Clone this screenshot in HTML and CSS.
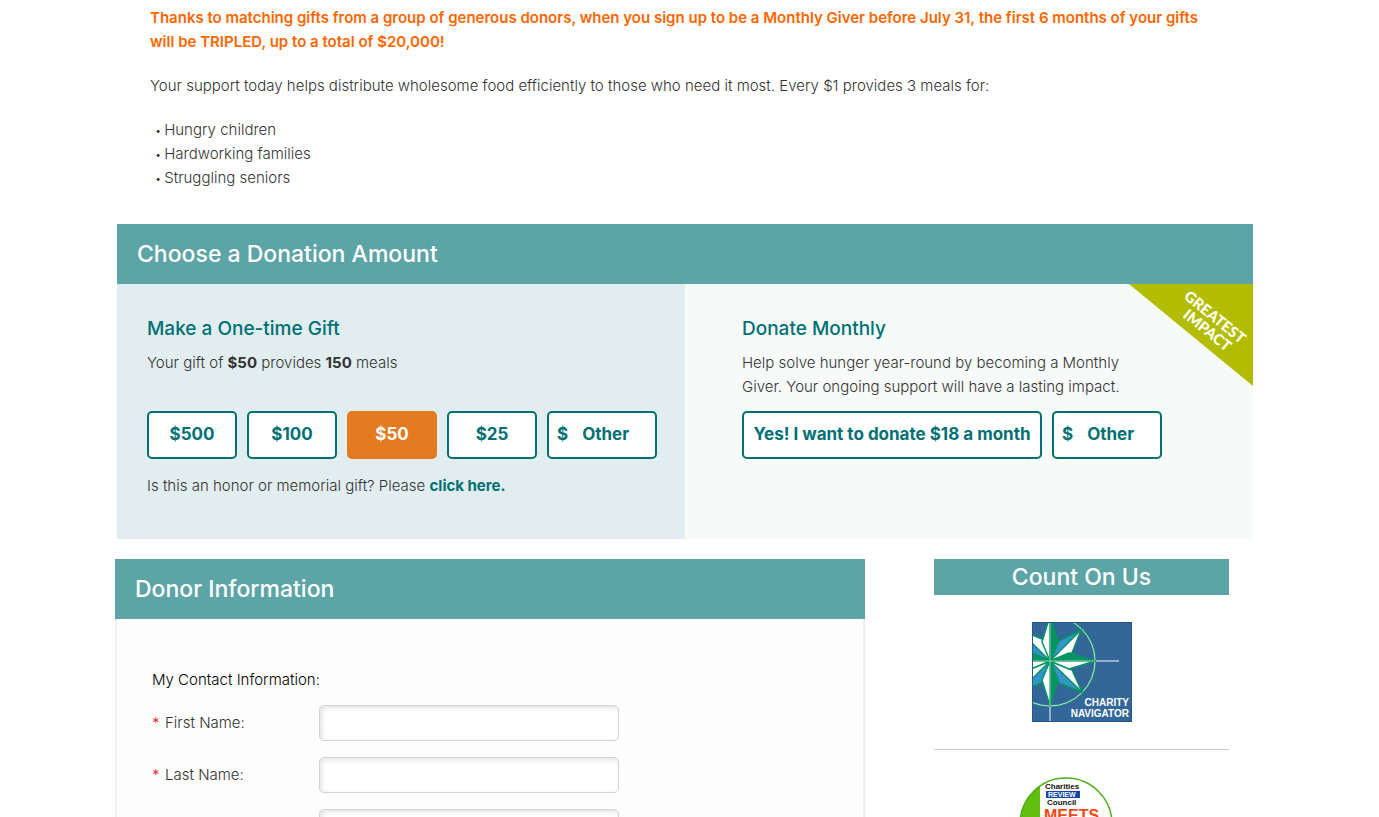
FILE: index.html
```
<!DOCTYPE html>
<html lang="en">
<head>
<meta charset="utf-8">
<title>Donate</title>
<link rel="stylesheet" href="styles.css">
</head>
<body>
<main class="page">
  <section class="intro">
    <p class="intro-match">Thanks to matching gifts from a group of generous donors, when you sign up to be a Monthly Giver before July 31, the first 6 months of your gifts will be TRIPLED, up to a total of $20,000!</p>
    <p>Your support today helps distribute wholesome food efficiently to those who need it most. Every $1 provides 3 meals for:</p>
    <ul class="intro-list">
      <li>Hungry children</li>
      <li>Hardworking families</li>
      <li>Struggling seniors</li>
    </ul>
  </section>

  <section class="donation">
    <h2 class="bar">Choose a Donation Amount</h2>
    <div class="options">
      <div class="option option-once">
        <h3 class="option-title">Make a One-time Gift</h3>
        <p class="option-text">Your gift of <strong>$50</strong> provides <strong>150</strong> meals</p>
        <div class="amounts">
          <button type="button" class="amount">$500</button>
          <button type="button" class="amount">$100</button>
          <button type="button" class="amount amount-active">$50</button>
          <button type="button" class="amount">$25</button>
          <label class="other">$<input type="text" class="other-input" placeholder="Other" aria-label="Other one-time amount"></label>
        </div>
        <p>Is this an honor or memorial gift? Please <a class="link" href="#honor">click here.</a></p>
      </div>
      <div class="option option-monthly">
        <h3 class="option-title">Donate Monthly</h3>
        <p class="option-text">Help solve hunger year-round by becoming a Monthly Giver. Your ongoing support will have a lasting impact.</p>
        <div class="amounts">
          <button type="button" class="amount amount-wide">Yes! I want to donate $18 a month</button>
          <label class="other">$<input type="text" class="other-input" placeholder="Other" aria-label="Other monthly amount"></label>
        </div>
        <svg class="ribbon" viewBox="0 0 124 102" role="img" aria-label="Greatest impact">
          <path d="M0 0H124V102Z" fill="#b3bd00"/>
          <g transform="translate(54 14) rotate(39)" class="ribbon-text">
            <text x="0" y="0">GREATEST</text>
            <text x="11" y="15">IMPACT</text>
          </g>
        </svg>
      </div>
    </div>
  </section>

  <div class="columns">
    <form class="donor">
      <h2 class="bar">Donor Information</h2>
      <div class="donor-body">
        <p class="donor-title">My Contact Information:</p>
        <div class="field">
          <label for="first"><span class="star">*</span>First Name:</label>
          <input id="first" type="text">
        </div>
        <div class="field">
          <label for="last"><span class="star">*</span>Last Name:</label>
          <input id="last" type="text">
        </div>
        <div class="field">
          <span></span>
          <input type="text" aria-label="Street address">
        </div>
      </div>
    </form>

    <aside class="trust">
      <h2 class="trust-title">Count On Us</h2>
      <div class="trust-item">
        <svg class="navigator" viewBox="0 0 100 100" role="img" aria-label="Charity Navigator">
          <rect width="100" height="100" fill="#336699"/>
          <circle cx="18" cy="39" r="45" fill="none" stroke="#129b62" stroke-width="2"/>
          <circle cx="18" cy="39" r="45" fill="none" stroke="#c3d8e4" stroke-width="1"/>
          <path d="M64 39H87M18 85V100" stroke="#b9c9da" stroke-width="1.5"/>
          <g stroke="#079463" stroke-width="1.5" stroke-linejoin="round">
            <path d="M18 39L27 19 49 8 40 31Z" fill="#fff"/>
            <path d="M18 39L27 19 49 8Z" fill="#3494cd"/>
            <path d="M18 39L40 48 50 70 27 61Z" fill="#fff"/>
            <path d="M18 39L27 61 50 70Z" fill="#3494cd"/>
            <path d="M18 39L-6 28-14 7 10 17Z" fill="#3494cd"/>
            <path d="M18 39L-14 7 10 17Z" fill="#fff"/>
            <path d="M18 39L-4 48-14 71 9 61Z" fill="#3494cd"/>
            <path d="M18 39L-14 71-4 48Z" fill="#fff"/>
            <path d="M18 39L10 20 18-6Z" fill="#fff"/>
            <path d="M18 39L18-6 26 20Z" fill="#079463"/>
            <path d="M18 39L37 31 63 39Z" fill="#079463"/>
            <path d="M18 39L63 39 37 47Z" fill="#fff"/>
            <path d="M18 39L26 58 18 84Z" fill="#079463"/>
            <path d="M18 39L18 84 10 58Z" fill="#fff"/>
            <path d="M18 39L-1 31-27 39Z" fill="#079463"/>
            <path d="M18 39L-27 39-1 47Z" fill="#fff"/>
          </g>
          <path d="M0 39H63M18 0V85" stroke="#8fceb2" stroke-width="1"/>
          <g class="navigator-text"><text x="97" y="84">CHARITY</text><text x="97" y="95">NAVIGATOR</text></g>
          <rect x="0.5" y="0.5" width="99" height="99" fill="none" stroke="#29588a"/>
        </svg>
      </div>
      <div class="trust-item">
        <svg class="council" viewBox="0 0 94 94" role="img" aria-label="Charities Review Council Meets Standards">
          <circle cx="47" cy="47" r="46" fill="#fff"/>
          <path d="M21 9A46 46 0 0 0 21 85Z" fill="#5fbf0a"/>
          <circle cx="47" cy="47" r="46" fill="none" stroke="#4fae1b" stroke-width="1.5"/>
          <rect x="27" y="14" width="34" height="7" fill="#1747a6"/>
          <g class="council-text">
            <text x="26" y="12">Charities</text>
            <text x="29" y="20" class="council-review">REVIEW</text>
            <text x="28" y="28">Council</text>
          </g>
          <text x="25" y="44" class="council-meets">MEETS</text>
        </svg>
      </div>
    </aside>
  </div>
</main>
</body>
</html>
```
FILE: styles.css
```
* { box-sizing: border-box; }

body {
  height: 100vh;
  margin: 0;
  padding: 6px 9px 0 0;
  overflow: hidden;
  background: #fff;
  color: #333;
  font: 300 15px/24px Inter, "Liberation Sans", sans-serif;
}

h2, h3, p, ul { margin: 0; }

.page { max-width: 1140px; margin: 0 auto; }

.intro {
  display: flex;
  flex-direction: column;
  gap: 20px;
  padding: 0 34px 34px 35px;
}

.intro-match { color: #f60; font-weight: 600; }

.intro-list { padding: 0 0 0 5px; list-style: none; }
.intro-list li::before { content: "•"; margin-right: 3px; font-size: 11px; line-height: 1; }

.bar {
  padding: 0 20px;
  background: #5da4a7;
  color: #fff;
  font-size: 23px;
  font-weight: 500;
  line-height: 60px;
}

.donation { margin: 0 2px 20px; }

.options { display: grid; grid-template-columns: 1fr 1fr; }

.option { padding: 33px 28px 41px 30px; background: #e1edee; }
.option-monthly { position: relative; padding-left: 57px; background: #f6faf9; }

.option-title {
  margin-bottom: 10px;
  color: #007075;
  font-size: 19px;
  font-weight: 500;
}

.option-text { min-height: 48px; max-width: 400px; margin-bottom: 12px; }

strong { font-weight: 700; }

.amounts { display: flex; gap: 10px; margin-bottom: 15px; }

.amount, .other {
  height: 48px;
  border: 2px solid #007075;
  border-radius: 5px;
  background: #fff;
  color: #007075;
  font: 700 17px/24px Inter, "Liberation Sans", sans-serif;
}

.amount { width: 90px; padding: 0 0 2px; white-space: nowrap; }
.amount-active { border-color: #e37b20; background: #e37b20; color: #fff; }
.amount-wide { width: 300px; }

.other {
  display: flex;
  align-items: center;
  gap: 14px;
  width: 110px;
  padding: 0 8px 2px;
}

.other-input {
  width: 100%;
  min-width: 0;
  padding: 0;
  border: 0;
  background: none;
  color: inherit;
  font: inherit;
}
.other-input::placeholder { color: #007075; opacity: 1; }

.link { color: #007075; font-weight: 700; text-decoration: none; }

.ribbon { position: absolute; top: 0; right: 0; width: 124px; height: 102px; }
.ribbon-text { fill: #fff; font: 900 15px Lato, sans-serif; }

.columns { display: flex; justify-content: space-between; align-items: flex-start; }

.donor { width: 750px; }

.donor-body {
  display: flex;
  flex-direction: column;
  gap: 16px;
  padding: 49px 35px;
  border: solid #eee;
  border-width: 0 2px 2px;
  background: #fdfdfd;
}

.donor-title { margin-bottom: -3px; color: #000; }

.field { display: grid; grid-template-columns: 167px 300px; align-items: center; }

.field input {
  height: 36px;
  padding: 0 10px;
  border: 1px solid #d5d5cf;
  border-radius: 5px;
  background: #fff;
  box-shadow: inset 2px 2px 5px #e4e4e4;
  font: inherit;
}

.star { display: inline-block; width: 13px; color: #d22; }

.trust { width: 295px; margin-right: 26px; }

.trust-title {
  background: #5da4a7;
  color: #fff;
  font-size: 23px;
  font-weight: 500;
  line-height: 36px;
  text-align: center;
}

.trust-item { display: flex; justify-content: center; padding: 27px 0; border-bottom: 1px solid #ccc; }

.navigator { width: 100px; height: 100px; }
.navigator-text { fill: #fff; font: 700 10px "Liberation Sans", sans-serif; text-anchor: end; }

.council { width: 94px; height: 94px; margin-right: 32px; }
.council-text { fill: #111; font: 700 8px "Liberation Sans", sans-serif; }
.council-review { fill: #fff; font-size: 7px; }
.council-meets { fill: #f04a16; font: 700 16px "Liberation Sans", sans-serif; }
```
